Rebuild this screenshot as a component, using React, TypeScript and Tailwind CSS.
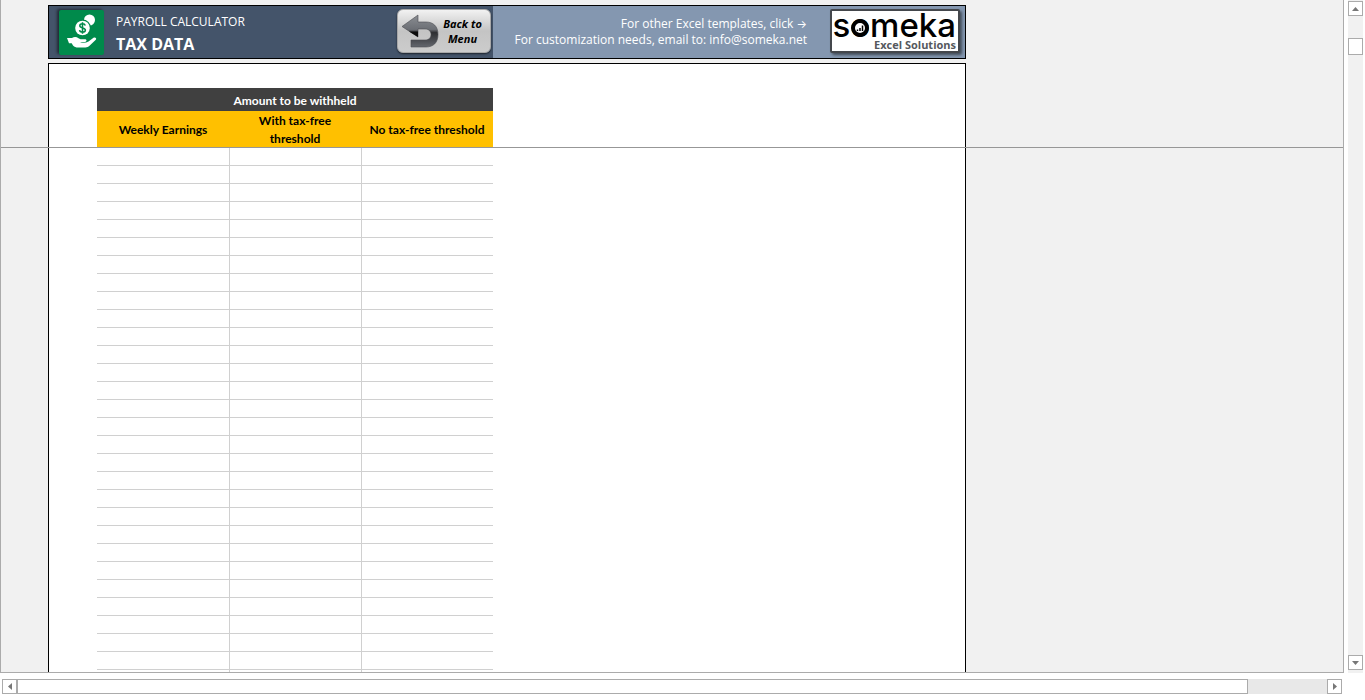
const rows = Array.from({ length: 30 }, (_, i) => i);

function PayrollIcon() {
    return (
        <svg viewBox="0 0 45 45" className="size-[45px]" aria-hidden="true">
            <circle cx="30.500" cy="10" r="5.500" fill="#fff" />
            <circle cx="23.500" cy="18" r="8.500" fill="#008a4b" />
            <circle cx="23.500" cy="18" r="7.300" fill="#fff" />
            <path
                d="M26.300 15.500c-.4-1.200-1.500-1.700-2.800-1.700-1.600 0-2.700.8-2.700 2 0 2.800 5.600 1.400 5.600 4.300 0 1.300-1.200 2.100-2.900 2.100-1.500 0-2.700-.7-3-2M23.500 12.300v11.400"
                fill="none"
                stroke="#008a4b"
                strokeWidth="1.500"
            />
            <path
                d="M8 28h5c2-1.200 4.500-1.200 6.500.2l2 1.100H26c2 0 2 2.400 0 2.600l-5 .3c3 .9 6 .6 8.500-.8l5-3.600c1.800-1 3.500.6 2.300 2l-6.300 6c-1.200 1.200-2.400 1.600-4 1.600H19c-2 0-3.600-.6-5-2l-1.300-2.200H10z"
                fill="#fff"
            />
        </svg>
    );
}

function BackArrow() {
    return (
        <svg viewBox="0 0 38 36" className="h-[36px] w-[38px]" aria-hidden="true">
            <defs>
                <linearGradient id="arrow" x1="0" y1="0" x2="0" y2="1">
                    <stop offset="0" stopColor="#8b8e93" />
                    <stop offset=".45" stopColor="#6c6f75" />
                    <stop offset=".55" stopColor="#2d2e31" />
                    <stop offset="1" stopColor="#64676e" />
                </linearGradient>
            </defs>
            <path
                d="M1 13.500 17 2v7h8c7 0 12 4 12 12.500S32 34 25 34H10v-7h14c4 0 6-2.500 6-5.500S28 16 24 16h-7v8z"
                fill="url(#arrow)"
                stroke="#4a4c50"
                strokeWidth=".6"
            />
            <path d="M8 18.500h9V24z" fill="#0c0c0c" />
        </svg>
    );
}

function SomekaLogo() {
    return (
        <a
            href="#someka"
            className="flex h-[44px] w-[130px] flex-col items-end rounded-[2px] border-2 border-[#44474c] bg-white pr-[2px] shadow-[2px_2px_3px_rgba(0,0,0,0.5)]"
        >
            <span className="font-[Inter,sans-serif] text-[33px] leading-[28px] font-medium text-black">
                s
                <span className="relative">
                    o
                    <svg viewBox="0 0 18 18" className="absolute bottom-[8px] left-[1px] size-[18px]" aria-hidden="true">
                        <circle cx="9" cy="9" r="7" fill="#fff" stroke="#000" strokeWidth="4" />
                        <path d="M6.500 12v-1.500M9 12V9M11.500 12V6.500" stroke="#000" strokeWidth="1.500" />
                    </svg>
                </span>
                meka
            </span>
            <span className="font-['Open_Sans',sans-serif] text-[11px] leading-[12px] font-bold text-[#55585d]">
                Excel Solutions
            </span>
        </a>
    );
}

function Banner() {
    return (
        <header className="flex h-[54px] shrink-0 border border-black bg-[#8497b0] text-white">
            <div className="flex w-[444px] items-center bg-[#44546a] pr-[2px] pl-[10px]">
                <div className="rounded-[2px] bg-[#008a4b] shadow-[-2px_-1px_3px_rgba(0,0,0,0.5)]">
                    <PayrollIcon />
                </div>
                <div className="ml-[12px] flex-1 pt-[2px]">
                    <p className="text-[12px] leading-[22px]">PAYROLL CALCULATOR</p>
                    <h1 className="text-[16px] leading-[22px] font-bold">TAX DATA</h1>
                </div>
                <button className="mb-[2px] flex h-[44px] w-[94px] items-center rounded-md border border-[#a8a8a8] bg-linear-to-b from-[#f2f2f2] via-[#c4c4c4] to-[#cccccc] pr-[4px] pl-[3px] text-black shadow-[0_1px_2px_rgba(0,0,0,0.6)]">
                    <BackArrow />
                    <span className="flex-1 text-center text-[11px] leading-[15px] font-bold whitespace-nowrap italic">
                        Back to
                        <br />
                        Menu
                    </span>
                </button>
            </div>
            <div className="flex flex-1 items-center justify-end pr-[5px] pb-[2px]">
                <p className="mr-[23px] text-right text-[12px] leading-[15px]">
                    For other Excel templates, click <span className="font-[Inter,sans-serif] text-[11px]">→</span>
                    <br />
                    For customization needs, email to: info@someka.net
                </p>
                <SomekaLogo />
            </div>
        </header>
    );
}

function TaxTable() {
    return (
        <table className="w-[396px] table-fixed border-separate border-spacing-0 font-[Lato,sans-serif] text-[12px] leading-[18px] text-black">
            <thead>
                <tr className="h-[23px] bg-[#404040] text-white">
                    <th colSpan={3} className="p-0 pt-[2px]">Amount to be withheld</th>
                </tr>
                <tr className="h-[37px] bg-[#ffc000]">
                    <th className="p-0">Weekly Earnings</th>
                    <th className="px-5 py-0">With tax-free threshold</th>
                    <th className="p-0 whitespace-nowrap">No tax-free threshold</th>
                </tr>
            </thead>
            <tbody>
                {rows.map(row => (
                    <tr key={row} className="h-[18px]">
                        <td className="border-b border-[#d0d0d0] p-0"></td>
                        <td className="border-b border-l border-[#d0d0d0] p-0"></td>
                        <td className="border-b border-l border-[#d0d0d0] p-0"></td>
                    </tr>
                ))}
            </tbody>
        </table>
    );
}

const arrowButton = 'flex size-[15px] shrink-0 items-center justify-center border border-[#ababab] bg-white';

function VerticalScrollbar() {
    return (
        <div className="ml-[4px] mr-[2px] flex w-[15px] flex-col bg-[#f1f1f1] pt-px pb-[3px]">
            <button aria-label="Scroll up" className={arrowButton}>
                <svg viewBox="0 0 7 4" className="h-[4px] w-[7px]" fill="#777"><path d="M0 4 3.500 0 7 4z" /></svg>
            </button>
            <div className="flex-1 pt-[22px]">
                <div className="h-[17px] border border-[#ababab] bg-white"></div>
            </div>
            <button aria-label="Scroll down" className={arrowButton}>
                <svg viewBox="0 0 7 4" className="h-[4px] w-[7px]" fill="#777"><path d="M0 0 3.500 4 7 0z" /></svg>
            </button>
        </div>
    );
}

function HorizontalScrollbar() {
    return (
        <div className="mt-[6px] mr-[23px] mb-[6px] ml-[2px] flex h-[15px] bg-[#e8e8e8]">
            <button aria-label="Scroll left" className={arrowButton}>
                <svg viewBox="0 0 4 7" className="h-[7px] w-[4px]" fill="#777"><path d="M4 0 0 3.500 4 7z" /></svg>
            </button>
            <div className="flex-1">
                <div className="h-[15px] w-[94%] border border-[#ababab] bg-white"></div>
            </div>
            <button aria-label="Scroll right" className={arrowButton}>
                <svg viewBox="0 0 4 7" className="h-[7px] w-[4px]" fill="#777"><path d="M0 0 4 3.500 0 7z" /></svg>
            </button>
        </div>
    );
}

export default function App() {
    return (
        <div className="flex h-screen flex-col overflow-hidden bg-white font-['Open_Sans',sans-serif]">
            <div className="flex min-h-0 flex-1">
                <main className="relative flex flex-1 overflow-hidden border-r border-b border-l border-[#ababab] bg-[#f1f1f1] pt-[5px] pl-[47px]">
                    <div className="flex w-[918px] flex-col">
                        <Banner />
                        <div className="mt-[4px] min-h-0 flex-1 overflow-hidden border-x border-t border-black bg-white pt-[24px] pl-[48px]">
                            <TaxTable />
                        </div>
                    </div>
                    {/* freeze pane line */}
                    <div className="absolute inset-x-0 top-[147px] h-px bg-[#979797]"></div>
                </main>
                <VerticalScrollbar />
            </div>
            <HorizontalScrollbar />
        </div>
    );
}
